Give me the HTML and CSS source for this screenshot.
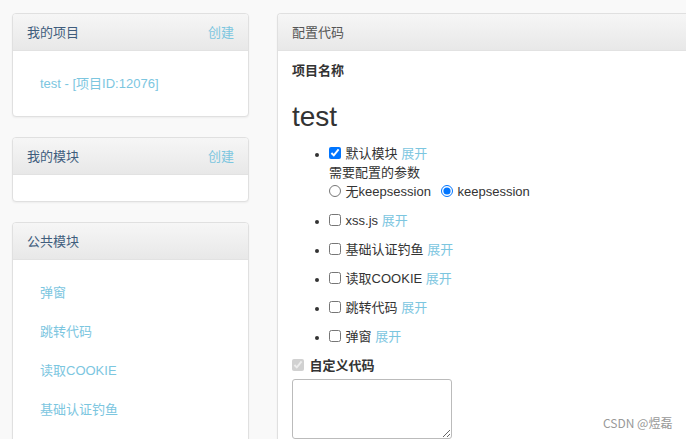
FILE: index.html
```html
<!DOCTYPE html>
<html lang="zh">
<head>
<meta charset="utf-8">
<title>配置代码</title>
<link rel="stylesheet" href="styles.css">
</head>
<body>
<div class="page">
  <aside class="side">
    <section class="panel">
      <div class="panel-heading side-heading">
        <span>我的项目</span>
        <a class="link" href="#">创建</a>
      </div>
      <div class="panel-body">
        <ul class="nav-list">
          <li><a class="link" href="#">test - [项目ID:12076]</a></li>
        </ul>
      </div>
    </section>
    <section class="panel">
      <div class="panel-heading side-heading">
        <span>我的模块</span>
        <a class="link" href="#">创建</a>
      </div>
      <div class="panel-body">
        <ul class="nav-list"></ul>
      </div>
    </section>
    <section class="panel">
      <div class="panel-heading side-heading">
        <span>公共模块</span>
      </div>
      <div class="panel-body">
        <ul class="nav-list">
          <li><a class="link" href="#">弹窗</a></li>
          <li><a class="link" href="#">跳转代码</a></li>
          <li><a class="link" href="#">读取COOKIE</a></li>
          <li><a class="link" href="#">基础认证钓鱼</a></li>
        </ul>
      </div>
    </section>
  </aside>
  <main class="panel main-panel">
    <div class="panel-heading main-heading">配置代码</div>
    <div class="main-body">
      <div class="label">项目名称</div>
      <h1 class="project-name">test</h1>
      <ul class="modules">
        <li>
          <label class="check"><input type="checkbox" checked> 默认模块</label>
          <a class="link" href="#">展开</a>
          <div class="params">需要配置的参数</div>
          <div class="radios">
            <label class="radio"><input type="radio" name="ks"> 无keepsession</label>
            <label class="radio"><input type="radio" name="ks" checked> keepsession</label>
          </div>
        </li>
        <li><label class="check"><input type="checkbox"> xss.js</label> <a class="link" href="#">展开</a></li>
        <li><label class="check"><input type="checkbox"> 基础认证钓鱼</label> <a class="link" href="#">展开</a></li>
        <li><label class="check"><input type="checkbox"> 读取COOKIE</label> <a class="link" href="#">展开</a></li>
        <li><label class="check"><input type="checkbox"> 跳转代码</label> <a class="link" href="#">展开</a></li>
        <li><label class="check"><input type="checkbox"> 弹窗</label> <a class="link" href="#">展开</a></li>
      </ul>
      <label class="custom"><input type="checkbox" checked disabled> 自定义代码</label>
      <textarea class="code" cols="20" rows="3"></textarea>
    </div>
  </main>
</div>
<div class="watermark">CSDN @煜磊</div>
</body>
</html>
```
FILE: styles.css
```css
html, body {
  margin: 0;
  padding: 0;
  background: #f9f9f9;
  overflow: hidden;
  height: 439px;
}
body {
  font-family: "Liberation Sans", Arial, "Noto Sans CJK SC", sans-serif;
  font-size: 13px;
  line-height: 19px;
  color: #333;
}
.page {
  width: 1000px;
  padding: 13px 12px;
  display: grid;
  grid-template-columns: 237px 1fr;
  column-gap: 28px;
  align-items: start;
}
.side {
  display: flex;
  flex-direction: column;
  gap: 20px;
}
.panel {
  background: #fff;
  border: 1px solid #e0e0e0;
  border-radius: 4px;
  box-shadow: 0 1px 2px rgba(0,0,0,0.05);
  box-sizing: border-box;
}
.panel-heading {
  height: 37px;
  box-sizing: border-box;
  padding: 0 14px;
  display: flex;
  align-items: center;
  justify-content: space-between;
  background: linear-gradient(#f6f6f6, #e8e8e8);
  border-bottom: 1px solid #e2e2e2;
  border-radius: 3px 3px 0 0;
}
.side-heading { color: #3f5d7d; }
.main-heading { color: #555; }
.link {
  color: #7cc6df;
  text-decoration: none;
}
.panel-body {
  padding: 13px 15px;
}
.nav-list {
  list-style: none;
  margin: 0;
  padding: 0;
}
.nav-list li {
  padding: 10px 12px;
}
.main-panel {
  height: 480px;
  border-right: none;
}
.main-body {
  padding: 10px 14px;
}
.label {
  font-weight: bold;
  color: #333;
}
.project-name {
  font-weight: normal;
  font-size: 28px;
  line-height: 34px;
  margin: 20px 0 10px;
  color: #333;
}
.modules {
  margin: 0;
  padding: 0 0 0 37px;
}
.modules li {
  margin-bottom: 10px;
}
.modules li::marker {
  font-size: 12px;
}
.check input, .radio input {
  width: 12px;
  height: 12px;
  margin: 0 1px 0 0;
  vertical-align: -1px;
}
.radios {
  display: flex;
  gap: 10px;
}
.custom {
  display: block;
  font-weight: bold;
}
.custom input {
  width: 12px;
  height: 12px;
  margin: 0 2px 0 0;
  vertical-align: -1px;
}
.code {
  display: block;
  margin-top: 4px;
  width: 160px;
  height: 60px;
  box-sizing: border-box;
  border: 1px solid #bbb;
  border-radius: 3px;
  resize: both;
}
.watermark {
  position: absolute;
  left: 603px;
  top: 415px;
  font-size: 12px;
  color: #999;
  font-family: "Noto Sans CJK SC", sans-serif;
  line-height: 16px;
}
```
